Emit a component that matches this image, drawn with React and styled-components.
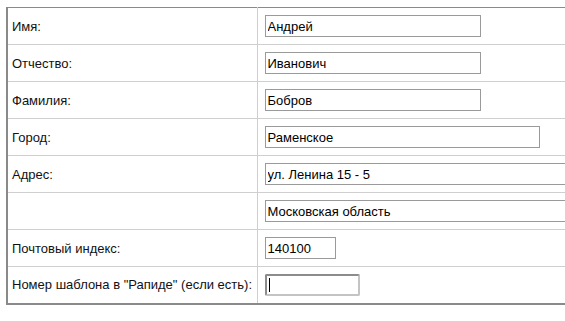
import styled, { createGlobalStyle } from "styled-components";

const Global = createGlobalStyle`
  html, body { margin: 0; padding: 0; background: #fff; overflow: hidden; }
  body { font-family: "Liberation Sans", Arial, sans-serif; font-size: 13px; color: #111; }
`

const Page = styled.div`
  width: 565px;
  height: 321px;
  box-sizing: border-box;
  padding: 7px 0 0 6px;
  overflow: hidden;
`

const Form = styled.table`
  border-collapse: collapse;
  width: 640px;
  border-top: 1px solid #8a8a8a;
  border-left: 2px solid #8a8a8a;
  border-bottom: 2px solid #8a8a8a;
  table-layout: fixed;
`

const Row = styled.tr`
  height: 37px;
  border-bottom: 1px solid #cfcfcf;
  &:last-child { border-bottom: none; }
`

const Label = styled.td`
  width: 250px;
  box-sizing: border-box;
  padding: 0 0 0 4px;
  border-right: 1px solid #cfcfcf;
  vertical-align: middle;
  white-space: nowrap;
`

const Field = styled.td`
  padding: 0 0 0 7px;
  vertical-align: middle;
`

const Input = styled.input`
  display: block;
  box-sizing: border-box;
  width: ${p => p.$w}px;
  height: 22px;
  margin: 0;
  padding: 0 2px;
  border: 1px solid #9a9a9a;
  font-family: "Liberation Sans", Arial, sans-serif;
  font-size: 13px;
  color: #000;
  background: #fff;
  outline: none;
`

const FocusBox = styled.div`
  position: relative;
  box-sizing: border-box;
  width: 95px;
  height: 22px;
  border: 2px solid #8c8c8c;
  border-right-color: #c4c4c4;
  border-bottom-color: #c4c4c4;
  border-radius: 2px;
`

const Caret = styled.span`
  position: absolute;
  left: 2px;
  top: 2px;
  width: 1px;
  height: 14px;
  background: #000;
`

const rows = [
  { label: "Имя:", value: "Андрей", w: 216 },
  { label: "Отчество:", value: "Иванович", w: 216 },
  { label: "Фамилия:", value: "Бобров", w: 216 },
  { label: "Город:", value: "Раменское", w: 275 },
  { label: "Адрес:", value: "ул. Ленина 15 - 5", w: 330 },
  { label: "", value: "Московская область", w: 330 },
  { label: "Почтовый индекс:", value: "140100", w: 71 },
]

export default function App() {
  return (
    <Page>
      <Global />
      <Form>
        <tbody>
          {rows.map((r, i) => (
            <Row key={i}>
              <Label>{r.label}</Label>
              <Field>
                <Input $w={r.w} defaultValue={r.value} readOnly />
              </Field>
            </Row>
          ))}
          <Row>
            <Label>Номер шаблона в "Рапиде" (если есть):</Label>
            <Field>
              <FocusBox><Caret /></FocusBox>
            </Field>
          </Row>
        </tbody>
      </Form>
    </Page>
  )
}
